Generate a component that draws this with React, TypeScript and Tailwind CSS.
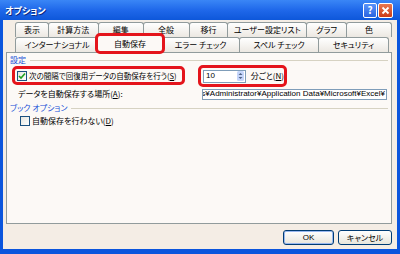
import React from 'react'

const row1 = [
  { label: '表示', w: 'w-[34px]' },
  { label: '計算方法', w: 'w-[51px]' },
  { label: '編集', w: 'w-[46px]' },
  { label: '全般', w: 'w-[47px]' },
  { label: '移行', w: 'w-[40px]' },
  { label: 'ユーザー設定リスト', w: 'w-[80px]' },
  { label: 'グラフ', w: 'w-[41px]' },
  { label: '色', w: 'w-[46px]' },
]

const row2 = [
  { label: 'インターナショナル', w: 'w-[84px]' },
  { label: '自動保存', w: 'w-[68px]', active: true },
  { label: 'エラー チェック', w: 'w-[79px]' },
  { label: 'スペル チェック', w: 'w-[80px]' },
  { label: 'セキュリティ', w: 'w-[71px]' },
]

const Tab = ({ label, w, active }: { label: string; w: string; active?: boolean }) => {
  if (active) {
    return (
      <div className={`relative z-10 -mb-px -ml-[3px] -mr-[2px] flex h-[19px] items-center justify-center rounded-t-[3px] border border-b-0 border-[#919b9c] bg-[#fcf9f6] ${w}`}>
        {label}
        <div className="absolute -inset-x-[2px] -top-[2px] -bottom-[1px] rounded-[5px] border-[3px] border-[#e4141b]" />
      </div>
    )
  }
  return (
    <div className={`-ml-px flex h-[15px] items-center justify-center rounded-t-[3px] border border-b-0 border-[#919b9c] bg-gradient-to-b from-white to-[#ece8e2] first:ml-0 ${w}`}>
      {label}
    </div>
  )
}

const Check = ({ checked }: { checked?: boolean }) => (
  <div className="flex h-[10px] w-[10px] shrink-0 items-center justify-center border border-[#1c5180] bg-gradient-to-br from-[#e6e6df] to-white">
    {checked && (
      <svg width="8" height="8" viewBox="0 0 8 8">
        <path d="M1 4 L3 6 L7 1.5" fill="none" stroke="#21a121" strokeWidth="1.6" />
      </svg>
    )}
  </div>
)

const GroupHeader = ({ label }: { label: string }) => (
  <div className="flex h-[10px] items-center pl-[3px] pr-[3px]">
    <span className="text-[#2150d6]">{label}</span>
    <div className="ml-[4px] h-px flex-1 bg-[#d6d2c2]" />
  </div>
)

export default function App() {
  return (
    <div className="flex h-[254px] w-[400px] flex-col bg-[#0b55dd] font-['Noto_Sans_CJK_JP',sans-serif] text-[8px] leading-none text-black [font-feature-settings:'palt']">
      {/* title bar */}
      <div className="flex h-[20px] shrink-0 items-center bg-gradient-to-b from-[#3a86f6] via-[#1f68ea] to-[#0d57da] pl-[5px] pr-[7px]">
        <span className="flex-1 text-[9px] font-bold text-white [text-shadow:1px_1px_0_#0a2a80]">オプション</span>
        <div className="flex gap-px">
          <div className="flex h-[15px] w-[14px] items-center justify-center rounded-[2px] border border-white bg-gradient-to-b from-[#5a93fa] to-[#2a63e0] text-[10px] font-bold text-white">?</div>
          <div className="flex h-[15px] w-[15px] items-center justify-center rounded-[2px] border border-white bg-gradient-to-b from-[#e8774f] to-[#cc3a14]">
            <svg width="9" height="9" viewBox="0 0 9 9">
              <path d="M1.5 1.5 L7.5 7.5 M7.5 1.5 L1.5 7.5" stroke="white" strokeWidth="1.8" />
            </svg>
          </div>
        </div>
      </div>

      {/* body */}
      <div className="mx-[3px] mb-[5px] flex flex-1 flex-col bg-[#f4ede5] pl-[3px] pr-[5px] pt-[2px] pb-[4px]">
        <div className="ml-[9px] flex">
          {row1.map((t) => (
            <Tab key={t.label} {...t} />
          ))}
        </div>
        <div className="ml-[9px] flex h-[15px] items-end">
          {row2.map((t) => (
            <Tab key={t.label} {...t} />
          ))}
        </div>

        {/* panel */}
        <div className="flex h-[172px] flex-col border border-[#919b9c] bg-[#fcf9f6] pt-[2px]">
          <GroupHeader label="設定" />

          <div className="flex h-[22px] items-start">
            <div className="ml-[5px] mt-px flex h-[19px] w-[173px] items-center gap-[2px] rounded-[5px] border-[3px] border-[#e4141b] pl-[2px]">
              <Check checked />
              <span className="whitespace-nowrap text-[7.5px]">次の間隔で回復用データの自動保存を行う(<span className="underline">S</span>)</span>
            </div>
            <div className="ml-[13px] flex h-[22px] w-[89px] items-center gap-[5px] rounded-[5px] border-[3px] border-[#e4141b] pl-[2px]">
              <div className="flex h-[13px] w-[43px] items-center justify-between border border-[#7f9db9] bg-white pl-[2px] pr-px">
                <span className="font-['Liberation_Sans',sans-serif]">10</span>
                <svg width="7" height="10" viewBox="0 0 7 10">
                  <rect x="0" y="0" width="7" height="10" rx="1.5" fill="#c6d6fb" />
                  <path d="M1.5 4 L3.5 2 L5.5 4 Z M1.5 6 L3.5 8 L5.5 6 Z" fill="#4d6185" />
                </svg>
              </div>
              <span className="whitespace-nowrap">分ごと(<span className="underline">N</span>)</span>
            </div>
          </div>

          <div className="mt-px flex h-[12px] items-center">
            <span className="ml-[11px] w-[184px] whitespace-nowrap">データを自動保存する場所(<span className="underline">A</span>):</span>
            <div className="flex h-[11px] w-[185px] items-center justify-end overflow-hidden border border-[#7f9db9] bg-white pr-px">
              <span className="whitespace-nowrap font-['Liberation_Sans','Noto_Sans_CJK_JP',sans-serif]">
                s¥Administrator¥Application Data¥Microsoft¥Excel¥
              </span>
            </div>
          </div>

          <div className="mt-[3px]">
            <GroupHeader label="ブック オプション" />
          </div>

          <div className="ml-[13px] mt-[2px] flex h-[11px] items-center gap-[2px]">
            <Check />
            <span className="whitespace-nowrap">自動保存を行わない(<span className="underline">D</span>)</span>
          </div>
        </div>

        {/* buttons */}
        <div className="mt-[6px] flex justify-end gap-[4px]">
          <button className="flex h-[15px] w-[51px] items-center justify-center rounded-[3px] border border-[#003c74] bg-gradient-to-b from-white to-[#e8e6dc] font-['Liberation_Sans',sans-serif] shadow-[inset_0_0_0_1px_#98b8f0]">
            OK
          </button>
          <button className="flex h-[15px] w-[54px] items-center justify-center rounded-[3px] border border-[#003c74] bg-gradient-to-b from-white to-[#e8e6dc]">
            キャンセル
          </button>
        </div>
      </div>
    </div>
  )
}
